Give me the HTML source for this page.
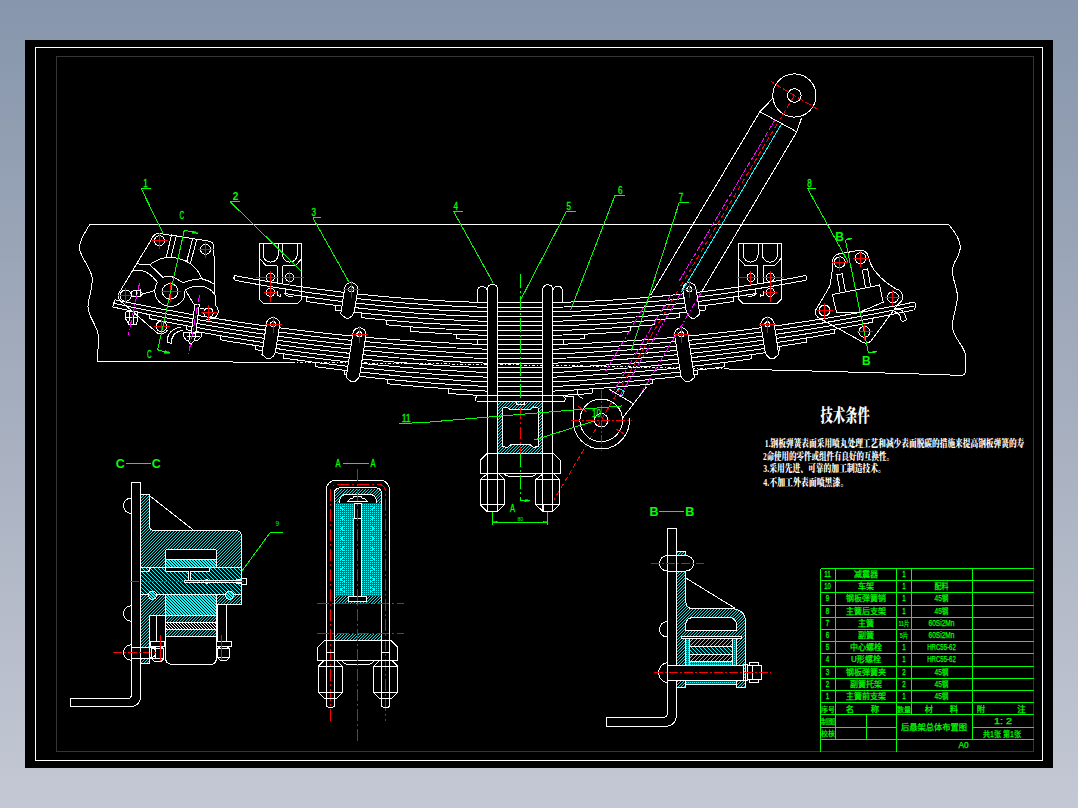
<!DOCTYPE html>
<html lang="zh"><head><meta charset="utf-8"><title>后悬架总体布置图</title>
<style>
html,body{margin:0;padding:0}
body{width:1078px;height:808px;overflow:hidden;background:linear-gradient(180deg,#8796ac 0%,#a5aebe 50%,#c4c8d4 100%)}
svg{position:absolute;left:0;top:0;display:block}
path,circle,rect,line{fill:none;stroke-width:1;stroke-linecap:butt;stroke-linejoin:miter}
.blk{fill:#000;stroke:none}
.gry{stroke:#343434}
.hc{fill:url(#hc);stroke:none}
.hc2{fill:url(#hc2);stroke:none}
.hcd{fill:url(#hcd);stroke:none}
.hcb{fill:url(#hcb);stroke:none}
.hw{fill:url(#hw);stroke:none}
.hcm{fill:url(#hcm);stroke:none}
.hw2{fill:url(#hc2m);stroke:none}
.gtB{fill:#0f0;font-size:12.5px;font-weight:bold}
.w{stroke:#fff}
.wb{stroke:#fff;fill:#000}
.kb{stroke:none;fill:#000}
.wdd{stroke:#fff;stroke-dasharray:3 2 1 2}
.r{stroke:#f00}
.rd{stroke:#f00;stroke-dasharray:5 3}
.rd2{stroke:#f00;stroke-dasharray:9 2 2 2}
.rd3{stroke:#f00;stroke-dasharray:6 2.5}
.rdd{stroke:#f00;stroke-dasharray:12 3 2 3}
.g{stroke:#0f0}
.gf{stroke:#0f0;fill:#0f0;stroke-width:.6}
.gb{stroke:#0f0;stroke-width:1.6}
.gdd{stroke:#0f0;stroke-dasharray:14 3 2 3}
.c{stroke:#0ff}
.cf{stroke:#0ff;fill:#0ff}
.m{stroke:#f0f}
.md{stroke:#f0f;stroke-dasharray:5 2}
.mdd{stroke:#f0f;stroke-dasharray:7 2 1.5 2}
text{font-family:"Liberation Sans","Noto Sans CJK SC",sans-serif;stroke:none}
.gt{fill:#0f0;font-size:9.5px}
.gl{fill:#0f0;font-size:10.4px;stroke:#0f0;stroke-width:.3px}
.glb{fill:#0f0;font-size:10.4px;font-weight:bold}
.glc{fill:#0f0;font-size:11.6px;stroke:#0f0;stroke-width:.3px}
.gtb{fill:#0f0;font-size:12px;font-weight:bold}
.g9{fill:#0f0;font-size:8px}
.gts{fill:#0f0;font-size:5px}
.tt{fill:#0f0;font-size:8.3px;stroke:#0f0;stroke-width:.25px}
.tn{fill:#0f0;font-size:9px;stroke:#0f0;stroke-width:.3px}
.tt2{fill:#0f0;font-size:7px;stroke:#0f0;stroke-width:.2px}
.nt{fill:#fff;font-size:18.5px;font-weight:900;font-family:"Liberation Serif","Noto Serif CJK SC",serif}
.nn{fill:#fff;font-size:10.6px;font-weight:900;font-family:"Liberation Serif","Noto Serif CJK SC",serif}
</style></head><body>
<svg width="1078" height="808" viewBox="0 0 1078 808" shape-rendering="crispEdges">
<defs>
<pattern id="hc" width="3" height="3" patternUnits="userSpaceOnUse"><rect width="3" height="3" style="fill:#000;stroke:none"/><path d="M-1 4L4 -1M-1 1L1 -1M2 4L4 2" style="stroke:#0ff;stroke-width:0.9"/></pattern>
<pattern id="hc2" width="4" height="4" patternUnits="userSpaceOnUse"><rect width="4" height="4" style="fill:#000;stroke:none"/><path d="M-1 5L5 -1M-1 1L1 -1M3 5L5 3" style="stroke:#0ff;stroke-width:1.2"/></pattern>
<pattern id="hcd" width="2" height="2" patternUnits="userSpaceOnUse"><rect width="2" height="2" style="fill:#005c5c;stroke:none"/><rect width="1.1" height="1.1" style="fill:#0ff;stroke:none"/></pattern>
<pattern id="hcb" width="4" height="4" patternUnits="userSpaceOnUse"><rect width="4" height="4" style="fill:#0ff;stroke:none"/><path d="M-1 -1L5 5M-1 3L1 5M3 -1L5 1" style="stroke:#000;stroke-width:1.5"/></pattern>
<pattern id="hw" width="3" height="3" patternUnits="userSpaceOnUse"><rect width="3" height="3" style="fill:#000;stroke:none"/><path d="M-1 -1L4 4M-1 2L1 4M2 -1L4 1" style="stroke:#fff;stroke-width:1"/></pattern>
<pattern id="hc2m" width="4" height="4" patternUnits="userSpaceOnUse"><rect width="4" height="4" style="fill:#000;stroke:none"/><path d="M-1 -1L5 5M-1 3L1 5M3 -1L5 1" style="stroke:#0ff;stroke-width:1.2"/></pattern>
<pattern id="hcm" width="3" height="3" patternUnits="userSpaceOnUse"><rect width="3" height="3" style="fill:#0ff;stroke:none"/><path d="M-1 -1L4 4M-1 2L1 4M2 -1L4 1" style="stroke:#000;stroke-width:1.25"/></pattern>
</defs>
<rect class="blk" x="25.0" y="40.0" width="1028.0" height="728.0" />
<rect class="w" x="35.5" y="47.5" width="1007.0" height="713.0" />
<rect class="gry" x="56.5" y="56.5" width="977.0" height="695.0" />
<path class="w" d="M89.7 224.5L948.8 224.5" />
<path class="w" d="M89.7 224.5C84 234 79 242 79.5 248C80 258 92 268 92.3 279C92.6 292 87.5 298 88 307C88.5 318 98 326 98.5 337C99 347 97 355 97.1 361.7" />
<path class="w" d="M948.8 224.5C955 232 960.4 240 960.4 247.1C960.4 256 952.4 262 952.4 270.2C952.4 280 957.4 288 957.4 296.2C957.4 306 952.4 316 952.4 326.3C952.4 338 965.5 346 965.5 356.4L965.5 372L963.5 375.4" />
<path class="w" d="M97.1 361.7L116.6 361.7L136.1 361.7L155.6 361.8L175.1 361.8L194.6 361.9L214.0 361.9L233.5 362.0L253.0 362.1L272.5 362.3L292.0 362.4" />
<path class="wdd" d="M292.0 362.4L335.2 362.7L378.4 363.1L421.6 363.6L464.8 364.2L508.0 364.8L551.2 365.5L594.4 366.2L637.6 367.0L680.8 367.9L724.0 368.9" />
<path class="w" d="M724.0 368.9L748.0 369.4L771.9 370.0L795.9 370.6L819.8 371.2L843.8 371.9L867.7 372.5L891.6 373.2L915.6 373.9L939.5 374.7L963.5 375.4" />
<path class="w" d="M235.0 275.6L245.5 277.6L256.0 279.5L266.5 281.3L277.1 283.0L287.6 284.7L298.1 286.3L308.6 287.8L319.1 289.3L329.6 290.6L340.1 291.9L350.6 293.2L361.2 294.3L371.7 295.4L382.2 296.4L392.7 297.4L403.2 298.2L413.7 299.0L424.2 299.8L434.7 300.4L445.2 301.0L455.8 301.5L466.3 301.9L476.8 302.3L487.3 302.6" />
<path class="w" d="M553.3 302.6L563.8 302.3L574.3 301.9L584.8 301.5L595.3 301.0L605.9 300.4L616.4 299.8L626.9 299.0L637.4 298.2L647.9 297.4L658.4 296.4L668.9 295.4L679.4 294.3L690.0 293.2L700.5 291.9L711.0 290.6L721.5 289.3L732.0 287.8L742.5 286.3L753.0 284.7L763.5 283.0L774.1 281.3L784.6 279.5L795.1 277.6L805.6 275.6" />
<path class="w" d="M235.0 280.3L245.5 282.2L256.0 284.1L266.5 285.9L277.1 287.7L287.6 289.3L298.1 290.9L308.6 292.5L319.1 293.9L329.6 295.3L340.1 296.6L350.6 297.8L361.2 299.0L371.7 300.1L382.2 301.1L392.7 302.0L403.2 302.9L413.7 303.7L424.2 304.4L434.7 305.1L445.2 305.7L455.8 306.2L466.3 306.6L476.8 307.0L487.3 307.3" />
<path class="w" d="M553.3 307.3L563.8 307.0L574.3 306.6L584.8 306.2L595.3 305.7L605.9 305.1L616.4 304.4L626.9 303.7L637.4 302.9L647.9 302.0L658.4 301.1L668.9 300.1L679.4 299.0L690.0 297.8L700.5 296.6L711.0 295.3L721.5 293.9L732.0 292.5L742.5 290.9L753.0 289.3L763.5 287.7L774.1 285.9L784.6 284.1L795.1 282.2L805.6 280.3" />
<path class="w" d="M285.0 293.6L293.4 294.9L301.9 296.2L310.3 297.4L318.7 298.5L327.1 299.6L335.6 300.7L344.0 301.7L352.4 302.7L360.9 303.6L369.3 304.5L377.7 305.3L386.2 306.1L394.6 306.9L403.0 307.5L411.4 308.2L419.9 308.8L428.3 309.4L436.7 309.9L445.2 310.3L453.6 310.7L462.0 311.1L470.4 311.4L478.9 311.7L487.3 311.9" />
<path class="w" d="M553.3 311.9L561.7 311.7L570.2 311.4L578.6 311.1L587.0 310.7L595.4 310.3L603.9 309.9L612.3 309.4L620.7 308.8L629.2 308.2L637.6 307.5L646.0 306.9L654.4 306.1L662.9 305.3L671.3 304.5L679.7 303.6L688.2 302.7L696.6 301.7L705.0 300.7L713.5 299.6L721.9 298.5L730.3 297.4L738.7 296.2L747.2 294.9L755.6 293.6" />
<path class="w" d="M285.5 293.6L285.5 288.9" />
<path class="w" d="M755.5 293.6L755.5 288.9" />
<path class="w" d="M306.8 301.5L314.3 302.6L321.8 303.6L329.4 304.6L336.9 305.5L344.4 306.4L351.9 307.3L359.4 308.1L367.0 308.9L374.5 309.7L382.0 310.4L389.5 311.1L397.1 311.7L404.6 312.3L412.1 312.9L419.6 313.4L427.1 313.9L434.7 314.4L442.2 314.8L449.7 315.2L457.2 315.6L464.7 315.9L472.3 316.1L479.8 316.4L487.3 316.6" />
<path class="w" d="M553.3 316.6L560.8 316.4L568.3 316.1L575.9 315.9L583.4 315.6L590.9 315.2L598.4 314.8L605.9 314.4L613.5 313.9L621.0 313.4L628.5 312.9L636.0 312.3L643.5 311.7L651.1 311.1L658.6 310.4L666.1 309.7L673.6 308.9L681.2 308.1L688.7 307.3L696.2 306.4L703.7 305.5L711.2 304.6L718.8 303.6L726.3 302.6L733.8 301.5" />
<path class="w" d="M306.5 301.5L306.5 296.9" />
<path class="w" d="M733.5 301.5L733.5 296.9" />
<path class="w" d="M335.3 310.0L341.6 310.8L348.0 311.5L354.3 312.2L360.6 312.9L367.0 313.6L373.3 314.2L379.6 314.8L386.0 315.4L392.3 316.0L398.6 316.5L405.0 317.0L411.3 317.5L417.6 318.0L424.0 318.4L430.3 318.8L436.6 319.2L443.0 319.5L449.3 319.8L455.6 320.1L462.0 320.4L468.3 320.7L474.6 320.9L481.0 321.1L487.3 321.2" />
<path class="w" d="M553.3 321.2L559.6 321.1L566.0 320.9L572.3 320.7L578.6 320.4L585.0 320.1L591.3 319.8L597.6 319.5L604.0 319.2L610.3 318.8L616.6 318.4L623.0 318.0L629.3 317.5L635.6 317.0L642.0 316.5L648.3 316.0L654.6 315.4L661.0 314.8L667.3 314.2L673.6 313.6L680.0 312.9L686.3 312.2L692.6 311.5L699.0 310.8L705.3 310.0" />
<path class="w" d="M335.5 310.0L335.5 305.3" />
<path class="w" d="M705.5 310.0L705.5 305.3" />
<path class="w" d="M361.4 317.7L366.6 318.2L371.9 318.7L377.1 319.3L382.4 319.8L387.6 320.2L392.9 320.7L398.1 321.1L403.4 321.6L408.6 322.0L413.9 322.4L419.1 322.7L424.4 323.1L429.6 323.4L434.8 323.7L440.1 324.0L445.3 324.3L450.6 324.6L455.8 324.8L461.1 325.0L466.3 325.2L471.6 325.4L476.8 325.6L482.1 325.8L487.3 325.9" />
<path class="w" d="M553.3 325.9L558.5 325.8L563.8 325.6L569.0 325.4L574.3 325.2L579.5 325.0L584.8 324.8L590.0 324.6L595.3 324.3L600.5 324.0L605.8 323.7L611.0 323.4L616.2 323.1L621.5 322.7L626.7 322.4L632.0 322.0L637.2 321.6L642.5 321.1L647.7 320.7L653.0 320.2L658.2 319.8L663.5 319.3L668.7 318.7L674.0 318.2L679.2 317.7" />
<path class="w" d="M361.5 317.7L361.5 313.0" />
<path class="w" d="M679.5 317.7L679.5 313.0" />
<path class="w" d="M386.5 324.8L390.7 325.2L394.9 325.5L399.1 325.9L403.3 326.2L407.5 326.5L411.7 326.9L415.9 327.2L420.1 327.5L424.3 327.7L428.5 328.0L432.7 328.3L436.9 328.5L441.1 328.7L445.3 329.0L449.5 329.2L453.7 329.4L457.9 329.6L462.1 329.7L466.3 329.9L470.5 330.1L474.7 330.2L478.9 330.3L483.1 330.5L487.3 330.6" />
<path class="w" d="M553.3 330.6L557.5 330.5L561.7 330.3L565.9 330.2L570.1 330.1L574.3 329.9L578.5 329.7L582.7 329.6L586.9 329.4L591.1 329.2L595.3 329.0L599.5 328.7L603.7 328.5L607.9 328.3L612.1 328.0L616.3 327.7L620.5 327.5L624.7 327.2L628.9 326.9L633.1 326.5L637.3 326.2L641.5 325.9L645.7 325.5L649.9 325.2L654.1 324.8" />
<path class="w" d="M386.5 324.8L386.5 320.1" />
<path class="w" d="M654.5 324.8L654.5 320.1" />
<path class="w" d="M410.5 331.4L413.7 331.7L416.9 331.9L420.1 332.1L423.3 332.3L426.5 332.5L429.7 332.7L432.9 332.9L436.1 333.1L439.3 333.3L442.5 333.5L445.7 333.6L448.9 333.8L452.1 334.0L455.3 334.1L458.5 334.3L461.7 334.4L464.9 334.5L468.1 334.6L471.3 334.7L474.5 334.9L477.7 335.0L480.9 335.1L484.1 335.1L487.3 335.2" />
<path class="w" d="M553.3 335.2L556.5 335.1L559.7 335.1L562.9 335.0L566.1 334.9L569.3 334.7L572.5 334.6L575.7 334.5L578.9 334.4L582.1 334.3L585.3 334.1L588.5 334.0L591.7 333.8L594.9 333.6L598.1 333.5L601.3 333.3L604.5 333.1L607.7 332.9L610.9 332.7L614.1 332.5L617.3 332.3L620.5 332.1L623.7 331.9L626.9 331.7L630.1 331.4" />
<path class="w" d="M410.5 331.4L410.5 326.8" />
<path class="w" d="M630.5 331.4L630.5 326.8" />
<path class="w" d="M456.4 338.8L457.7 338.9L459.0 338.9L460.3 339.0L461.5 339.0L462.8 339.1L464.1 339.1L465.4 339.2L466.7 339.2L468.0 339.3L469.3 339.3L470.6 339.4L471.9 339.4L473.1 339.5L474.4 339.5L475.7 339.6L477.0 339.6L478.3 339.6L479.6 339.7L480.9 339.7L482.1 339.7L483.4 339.8L484.7 339.8L486.0 339.8L487.3 339.9" />
<path class="w" d="M553.3 339.9L554.6 339.8L555.9 339.8L557.2 339.8L558.4 339.7L559.7 339.7L561.0 339.7L562.3 339.6L563.6 339.6L564.9 339.6L566.2 339.5L567.5 339.5L568.8 339.4L570.0 339.4L571.3 339.3L572.6 339.3L573.9 339.2L575.2 339.2L576.5 339.1L577.8 339.1L579.0 339.0L580.3 339.0L581.6 338.9L582.9 338.9L584.2 338.8" />
<path class="w" d="M456.5 338.8L456.5 334.2" />
<path class="w" d="M584.5 338.8L584.5 334.2" />
<path class="w" d="M477.4 344.3L477.8 344.3L478.2 344.3L478.6 344.3L479.0 344.3L479.5 344.3L479.9 344.3L480.3 344.4L480.7 344.4L481.1 344.4L481.5 344.4L481.9 344.4L482.4 344.4L482.8 344.4L483.2 344.4L483.6 344.4L484.0 344.5L484.4 344.5L484.8 344.5L485.2 344.5L485.6 344.5L486.1 344.5L486.5 344.5L486.9 344.5L487.3 344.5" />
<path class="w" d="M553.3 344.5L553.7 344.5L554.1 344.5L554.5 344.5L554.9 344.5L555.4 344.5L555.8 344.5L556.2 344.5L556.6 344.5L557.0 344.4L557.4 344.4L557.8 344.4L558.2 344.4L558.7 344.4L559.1 344.4L559.5 344.4L559.9 344.4L560.3 344.4L560.7 344.3L561.1 344.3L561.5 344.3L562.0 344.3L562.4 344.3L562.8 344.3L563.2 344.3" />
<path class="w" d="M477.5 344.3L477.5 339.6" />
<path class="w" d="M563.5 344.3L563.5 339.6" />
<path class="w" d="M235.0 275.6Q232.8 277.9 235.0 280.3" />
<path class="w" d="M805.6 275.6Q807.8 277.9 805.6 280.3" />
<path class="w" d="M114.9 299.7L130.4 302.9L145.9 306.0L161.4 309.0L177.0 311.8L192.5 314.6L208.0 317.2L223.5 319.7L239.0 322.1L254.6 324.4L270.1 326.6L285.6 328.6L301.1 330.5L316.6 332.3L332.1 334.0L347.6 335.6L363.2 337.1L378.7 338.4L394.2 339.6L409.7 340.7L425.2 341.7L440.8 342.6L456.3 343.4L471.8 344.0L487.3 344.5" />
<path class="w" d="M553.3 344.5L568.3 344.0L583.4 343.4L598.4 342.7L613.5 341.9L628.5 340.9L643.6 339.9L658.6 338.7L673.7 337.4L688.7 336.0L703.8 334.5L718.8 332.9L733.9 331.2L748.9 329.4L763.9 327.4L779.0 325.4L794.0 323.2L809.1 321.0L824.1 318.6L839.2 316.1L854.2 313.5L869.3 310.8L884.3 308.0L899.4 305.1L914.4 302.0" />
<path class="w" d="M113.8 303.3L129.4 306.6L144.9 309.8L160.5 312.8L176.1 315.7L191.6 318.5L207.2 321.2L222.7 323.7L238.3 326.2L253.9 328.5L269.4 330.7L285.0 332.8L300.6 334.7L316.1 336.6L331.7 338.3L347.2 339.9L362.8 341.4L378.4 342.8L393.9 344.1L409.5 345.2L425.1 346.3L440.6 347.2L456.2 348.0L471.7 348.6L487.3 349.2" />
<path class="w" d="M553.3 349.2L568.3 348.7L583.3 348.0L598.4 347.3L613.4 346.4L628.4 345.4L643.4 344.3L658.5 343.1L673.5 341.8L688.5 340.4L703.5 338.9L718.6 337.3L733.6 335.5L748.6 333.7L763.6 331.7L778.7 329.6L793.7 327.5L808.7 325.2L823.8 322.8L838.8 320.3L853.8 317.6L868.8 314.9L883.8 312.1L898.9 309.1L913.9 306.1" />
<path class="w" d="M112.8 307.0L128.4 310.3L144.0 313.5L159.6 316.6L175.2 319.6L190.8 322.4L206.4 325.1L222.0 327.7L237.6 330.2L253.2 332.6L268.8 334.8L284.4 337.0L300.1 339.0L315.7 340.9L331.3 342.6L346.9 344.3L362.5 345.8L378.1 347.2L393.7 348.5L409.3 349.7L424.9 350.8L440.5 351.7L456.1 352.6L471.7 353.3L487.3 353.9" />
<path class="w" d="M553.3 353.9L568.3 353.3L583.3 352.6L598.3 351.8L613.3 350.9L628.3 349.9L643.3 348.8L658.3 347.6L673.3 346.3L688.3 344.8L703.3 343.3L718.3 341.6L733.4 339.9L748.4 338.0L763.4 336.0L778.4 333.9L793.4 331.7L808.4 329.4L823.4 326.9L838.4 324.4L853.4 321.8L868.4 319.0L883.4 316.1L898.4 313.2L913.4 310.1" />
<path class="w" d="M149.0 318.5L163.1 321.3L177.2 324.0L191.3 326.6L205.4 329.0L219.5 331.4L233.6 333.7L247.7 335.9L261.8 338.0L275.9 340.0L290.0 341.9L304.1 343.8L318.1 345.5L332.2 347.1L346.3 348.6L360.4 350.0L374.5 351.4L388.6 352.6L402.7 353.7L416.8 354.8L430.9 355.7L445.0 356.6L459.1 357.3L473.2 358.0L487.3 358.5" />
<path class="w" d="M553.3 358.5L566.6 358.0L579.9 357.4L593.2 356.7L606.5 355.9L619.9 355.0L633.2 354.1L646.5 353.1L659.8 351.9L673.1 350.7L686.4 349.4L699.7 348.0L713.0 346.6L726.4 345.0L739.7 343.4L753.0 341.6L766.3 339.8L779.6 337.9L792.9 335.9L806.2 333.9L819.5 331.7L832.9 329.5L846.2 327.1L859.5 324.7L872.8 322.2" />
<path class="w" d="M149.5 318.5L149.5 314.5" />
<path class="w" d="M872.5 322.2L872.5 318.2" />
<path class="w" d="M186.0 329.7L198.6 331.9L211.1 334.1L223.7 336.3L236.2 338.3L248.8 340.3L261.3 342.2L273.9 344.0L286.4 345.7L299.0 347.4L311.5 349.0L324.1 350.5L336.6 351.9L349.2 353.3L361.8 354.6L374.3 355.8L386.9 356.9L399.4 358.0L412.0 358.9L424.5 359.8L437.1 360.7L449.6 361.4L462.2 362.1L474.7 362.7L487.3 363.2" />
<path class="w" d="M553.3 363.2L565.0 362.7L576.8 362.2L588.5 361.5L600.2 360.9L612.0 360.1L623.7 359.3L635.4 358.4L647.2 357.5L658.9 356.5L670.6 355.4L682.4 354.2L694.1 353.0L705.8 351.7L717.6 350.4L729.3 349.0L741.0 347.5L752.8 345.9L764.5 344.3L776.2 342.6L788.0 340.9L799.7 339.0L811.4 337.2L823.2 335.2L834.9 333.2" />
<path class="w" d="M186.5 329.7L186.5 325.6" />
<path class="w" d="M834.5 333.2L834.5 329.1" />
<path class="w" d="M220.4 339.8L231.5 341.7L242.6 343.5L253.8 345.2L264.9 346.9L276.0 348.5L287.1 350.1L298.2 351.6L309.4 353.0L320.5 354.4L331.6 355.7L342.7 357.0L353.9 358.2L365.0 359.3L376.1 360.4L387.2 361.4L398.3 362.4L409.5 363.2L420.6 364.1L431.7 364.9L442.8 365.6L453.9 366.2L465.1 366.8L476.2 367.4L487.3 367.8" />
<path class="w" d="M553.3 367.8L563.9 367.4L574.4 366.9L585.0 366.3L595.5 365.7L606.1 365.0L616.6 364.3L627.2 363.6L637.8 362.7L648.3 361.8L658.9 360.9L669.4 359.9L680.0 358.9L690.6 357.8L701.1 356.6L711.7 355.4L722.2 354.1L732.8 352.8L743.4 351.4L753.9 350.0L764.5 348.5L775.0 347.0L785.6 345.4L796.1 343.8L806.7 342.1" />
<path class="w" d="M220.5 339.8L220.5 335.7" />
<path class="w" d="M806.5 342.1L806.5 337.9" />
<path class="w" d="M255.0 349.6L264.7 351.1L274.4 352.5L284.0 353.9L293.7 355.2L303.4 356.5L313.1 357.8L322.8 359.0L332.4 360.2L342.1 361.3L351.8 362.3L361.5 363.4L371.2 364.3L380.8 365.3L390.5 366.1L400.2 367.0L409.9 367.8L419.5 368.5L429.2 369.2L438.9 369.9L448.6 370.5L458.3 371.1L467.9 371.6L477.6 372.1L487.3 372.5" />
<path class="w" d="M553.3 372.5L562.7 372.1L572.1 371.6L581.5 371.1L590.9 370.6L600.4 370.0L609.8 369.3L619.2 368.7L628.6 368.0L638.0 367.2L647.4 366.4L656.8 365.5L666.2 364.6L675.7 363.7L685.1 362.7L694.5 361.7L703.9 360.6L713.3 359.5L722.7 358.4L732.1 357.2L741.6 356.0L751.0 354.7L760.4 353.4L769.8 352.0L779.2 350.6" />
<path class="w" d="M255.5 349.6L255.5 345.4" />
<path class="w" d="M779.5 350.6L779.5 346.4" />
<path class="w" d="M283.5 358.1L292.0 359.3L300.5 360.4L309.0 361.6L317.5 362.7L326.0 363.7L334.4 364.7L342.9 365.7L351.4 366.7L359.9 367.6L368.4 368.5L376.9 369.3L385.4 370.1L393.9 370.9L402.4 371.7L410.9 372.4L419.4 373.0L427.9 373.7L436.4 374.3L444.8 374.8L453.3 375.4L461.8 375.9L470.3 376.3L478.8 376.8L487.3 377.2" />
<path class="w" d="M553.3 377.2L561.6 376.8L569.8 376.4L578.1 375.9L586.4 375.4L594.6 374.9L602.9 374.4L611.2 373.8L619.4 373.2L627.7 372.5L636.0 371.9L644.2 371.1L652.5 370.4L660.8 369.6L669.0 368.8L677.3 368.0L685.6 367.1L693.8 366.2L702.1 365.2L710.4 364.2L718.6 363.2L726.9 362.2L735.2 361.1L743.4 360.0L751.7 358.8" />
<path class="w" d="M283.5 358.1L283.5 353.8" />
<path class="w" d="M751.5 358.8L751.5 354.6" />
<path class="w" d="M315.5 366.7L322.7 367.6L329.8 368.5L337.0 369.4L344.1 370.2L351.3 371.1L358.4 371.8L365.6 372.6L372.8 373.3L379.9 374.1L387.1 374.8L394.2 375.4L401.4 376.1L408.6 376.7L415.7 377.3L422.9 377.8L430.0 378.4L437.2 378.9L444.4 379.4L451.5 379.9L458.7 380.3L465.8 380.7L473.0 381.1L480.1 381.5L487.3 381.8" />
<path class="w" d="M553.3 381.8L560.4 381.5L567.5 381.1L574.7 380.7L581.8 380.3L588.9 379.9L596.0 379.4L603.1 378.9L610.3 378.4L617.4 377.9L624.5 377.3L631.6 376.7L638.8 376.1L645.9 375.5L653.0 374.8L660.1 374.1L667.2 373.4L674.4 372.7L681.5 371.9L688.6 371.1L695.7 370.3L702.8 369.5L710.0 368.6L717.1 367.7L724.2 366.8" />
<path class="w" d="M315.5 366.7L315.5 362.4" />
<path class="w" d="M724.5 366.8L724.5 362.5" />
<path class="w" d="M344.7 374.7L350.6 375.4L356.6 376.0L362.5 376.7L368.5 377.3L374.4 377.9L380.4 378.6L386.3 379.1L392.2 379.7L398.2 380.3L404.1 380.8L410.1 381.3L416.0 381.8L421.9 382.3L427.9 382.8L433.8 383.2L439.8 383.6L445.7 384.1L451.6 384.5L457.6 384.8L463.5 385.2L469.5 385.5L475.4 385.9L481.4 386.2L487.3 386.5" />
<path class="w" d="M553.3 386.5L559.3 386.2L565.3 385.9L571.3 385.5L577.3 385.2L583.3 384.8L589.3 384.4L595.3 384.0L601.3 383.6L607.3 383.2L613.3 382.7L619.3 382.2L625.3 381.7L631.4 381.2L637.4 380.7L643.4 380.2L649.4 379.6L655.4 379.0L661.4 378.4L667.4 377.8L673.4 377.2L679.4 376.5L685.4 375.9L691.4 375.2L697.4 374.5" />
<path class="w" d="M344.5 374.7L344.5 370.3" />
<path class="w" d="M697.5 374.5L697.5 370.1" />
<path class="w" d="M387.9 383.8L392.0 384.2L396.2 384.6L400.3 384.9L404.5 385.3L408.6 385.7L412.8 386.0L416.9 386.4L421.0 386.7L425.2 387.1L429.3 387.4L433.5 387.7L437.6 388.0L441.7 388.4L445.9 388.6L450.0 388.9L454.2 389.2L458.3 389.5L462.4 389.7L466.6 390.0L470.7 390.2L474.9 390.5L479.0 390.7L483.2 390.9L487.3 391.1" />
<path class="w" d="M553.3 391.1L557.4 390.9L561.5 390.7L565.7 390.5L569.8 390.2L573.9 390.0L578.0 389.8L582.1 389.5L586.3 389.2L590.4 388.9L594.5 388.7L598.6 388.4L602.8 388.1L606.9 387.8L611.0 387.4L615.1 387.1L619.2 386.8L623.4 386.4L627.5 386.1L631.6 385.7L635.7 385.4L639.8 385.0L644.0 384.6L648.1 384.2L652.2 383.8" />
<path class="w" d="M387.5 383.8L387.5 379.3" />
<path class="w" d="M652.5 383.8L652.5 379.3" />
<path class="w" d="M448.2 393.4L449.8 393.5L451.5 393.6L453.1 393.7L454.7 393.8L456.3 394.0L458.0 394.1L459.6 394.2L461.2 394.3L462.9 394.4L464.5 394.5L466.1 394.6L467.8 394.7L469.4 394.8L471.0 394.9L472.6 395.0L474.3 395.1L475.9 395.2L477.5 395.3L479.2 395.4L480.8 395.4L482.4 395.5L484.0 395.6L485.7 395.7L487.3 395.8" />
<path class="w" d="M553.3 395.8L554.9 395.7L556.6 395.6L558.2 395.5L559.8 395.4L561.4 395.4L563.1 395.3L564.7 395.2L566.3 395.1L568.0 395.0L569.6 394.9L571.2 394.8L572.8 394.7L574.5 394.6L576.1 394.5L577.7 394.4L579.4 394.3L581.0 394.2L582.6 394.1L584.3 394.0L585.9 393.8L587.5 393.7L589.1 393.6L590.8 393.5L592.4 393.4" />
<path class="w" d="M448.5 393.4L448.5 388.8" />
<path class="w" d="M592.5 393.4L592.5 388.8" />
<path class="w" d="M114.9 299.7L112.6 307.0" />
<path class="w" d="M914.4 302.0Q916.9 306.0 913.9 309.9" />
<path class="w" d="M497.7 302.5L542.8 302.5" />
<path class="w" d="M497.7 307.5L542.8 307.5" />
<path class="w" d="M497.7 311.5L542.8 311.5" />
<path class="w" d="M497.7 316.5L542.8 316.5" />
<path class="w" d="M497.7 321.5L542.8 321.5" />
<path class="w" d="M497.7 325.5L542.8 325.5" />
<path class="w" d="M497.7 330.5L542.8 330.5" />
<path class="w" d="M497.7 335.5L542.8 335.5" />
<path class="w" d="M497.7 339.5L542.8 339.5" />
<path class="w" d="M497.7 344.5L542.8 344.5" />
<path class="w" d="M497.7 349.5L542.8 349.5" />
<path class="w" d="M497.7 353.5L542.8 353.5" />
<path class="w" d="M497.7 358.5L542.8 358.5" />
<path class="w" d="M497.7 363.5L542.8 363.5" />
<path class="w" d="M497.7 367.5L542.8 367.5" />
<path class="w" d="M497.7 372.5L542.8 372.5" />
<path class="w" d="M497.7 377.5L542.8 377.5" />
<path class="w" d="M497.7 381.5L542.8 381.5" />
<path class="w" d="M497.7 386.5L542.8 386.5" />
<path class="w" d="M497.7 391.5L542.8 391.5" />
<path class="w" d="M497.7 395.5L542.8 395.5" />
<path class="w" d="M259.5 243.0L301.8 243.0L301.8 299.3L298.0 303.2L263.3 303.2L259.5 299.3Z" />
<path class="w" d="M263.1 243L263.1 254.6A7.5 7.5 0 0 0 278.2 254.6L278.2 243" />
<path class="w" d="M282.6 243L282.6 254.8A7.3 7.3 0 0 0 297.2 254.8L297.2 243" />
<path class="w" d="M259.5 258.5L266.0 265.5L277.3 265.5" />
<path class="w" d="M282.9 265.5L295.5 265.5L301.8 258.5" />
<path class="w" d="M277.3 265.5L277.3 283.2L282.9 283.2L282.9 265.5" />
<circle class="w" cx="270.4" cy="277.4" r="4.1" />
<circle class="w" cx="289.6" cy="277.4" r="4.1" />
<circle class="w" cx="270.4" cy="292.3" r="4.1" />
<path class="r" d="M256.2 277.5L278.5 277.5" />
<path class="r" d="M281.5 277.5L303.5 277.5" />
<path class="r" d="M270.5 270.5L270.5 284.5" />
<path class="r" d="M289.5 270.5L289.5 284.5" />
<path class="r" d="M264.0 292.5L276.8 292.5" />
<path class="r" d="M270.5 285.9L270.5 302.1" />
<path class="w" d="M277.5 290.5L277.5 295.5L280.5 296.3L280.5 293.5" />
<path class="w" d="M284.0 293.2Q287.0 297 292.5 296.2" />
<path class="w" d="M781.1 243.0L738.8 243.0L738.8 299.3L742.6 303.2L777.3 303.2L781.1 299.3Z" />
<path class="w" d="M777.5 243L777.5 254.6A7.5 7.5 0 0 1 762.4 254.6L762.4 243" />
<path class="w" d="M758.0 243L758.0 254.8A7.3 7.3 0 0 1 743.4 254.8L743.4 243" />
<path class="w" d="M781.1 258.5L774.6 265.5L763.3 265.5" />
<path class="w" d="M757.7 265.5L745.1 265.5L738.8 258.5" />
<path class="w" d="M763.3 265.5L763.3 283.2L757.7 283.2L757.7 265.5" />
<circle class="w" cx="770.2" cy="277.4" r="4.1" />
<circle class="w" cx="751.0" cy="277.4" r="4.1" />
<circle class="w" cx="770.2" cy="292.3" r="4.1" />
<path class="r" d="M784.4 277.5L762.1 277.5" />
<path class="r" d="M759.1 277.5L737.1 277.5" />
<path class="r" d="M770.5 270.5L770.5 284.5" />
<path class="r" d="M750.5 270.5L750.5 284.5" />
<path class="r" d="M776.6 292.5L763.8 292.5" />
<path class="r" d="M770.5 285.9L770.5 302.1" />
<path class="w" d="M763.1 290.5L763.1 295.5L760.1 296.3L760.1 293.5" />
<path class="w" d="M756.6 293.2Q753.6 297 748.1 296.2" />
<path class="w" d="M119.3 292.5L151.2 239.8Q153.3 234 158.6 233.4L209.7 241.2Q213.6 242.4 213.8 247.6L215.3 305.5" />
<path class="w" d="M119.3 292.5A7.4 7.4 0 0 0 121.2 301.6L156.6 332.4A7 7 0 0 0 167.3 330.2" />
<path class="w" d="M215.3 305.5A7.2 7.2 0 0 1 213.5 318 L206.5 320" />
<circle class="w" cx="159.4" cy="240.7" r="5.0" />
<path class="r" d="M151.5 240.5L167.5 240.5" />
<path class="r" d="M159.5 232.5L159.5 248.5" />
<circle class="w" cx="205.5" cy="249.3" r="5.0" />
<path class="r" d="M197.5 249.5L213.5 249.5" />
<path class="r" d="M205.5 241.5L205.5 257.5" />
<circle class="w" cx="125.6" cy="295.6" r="5.7" />
<path class="r" d="M117.5 295.5L133.5 295.5" />
<path class="r" d="M125.5 287.5L125.5 303.5" />
<circle class="w" cx="208.5" cy="312.6" r="4.7" />
<path class="r" d="M200.5 312.5L216.5 312.5" />
<path class="r" d="M208.5 304.5L208.5 320.5" />
<circle class="w" cx="161.4" cy="326.4" r="5.3" />
<path class="r" d="M153.5 326.5L169.5 326.5" />
<path class="r" d="M161.5 318.5L161.5 334.5" />
<circle class="w" cx="170.2" cy="291.4" r="7.8" />
<path class="r" d="M160.5 291.5L180.5 291.5" />
<path class="r" d="M170.5 281.5L170.5 301.5" />
<path class="w" d="M171.6 234.5L166.1 257.9" />
<path class="w" d="M176.3 235.4L170.7 258.2" />
<path class="w" d="M192.5 238.7L186.9 261.0" />
<path class="w" d="M196.6 239.8L190.2 264.3" />
<path class="w" d="M149.6 264.9A33.7 33.7 0 0 1 201.9 278.8" />
<path class="w" d="M136.8 263.8L149.6 264.9" />
<path class="w" d="M149.6 264.9Q156 270 162.9 277.2L168.5 276.2L174 277.3L183 282.7Q192 279 201.9 278.8Q209 280.5 214.8 284.4" />
<path class="w" d="M132.9 271Q140 269 146 272Q153 276 157.4 282.2Q155 286 154.8 290.6" />
<path class="w" d="M154.8 290.6A15.6 15.6 0 0 0 184.8 296.8" />
<path class="w" d="M184.8 296.8Q183.5 293 185.2 290Q189 286.5 199.7 286Q209 286.5 214.9 294.4" />
<path class="w" d="M185.2 290.0L194.1 304.5" />
<path class="w" d="M131.7 291.4L136.0 290.2L136.0 296.6L131.7 296.6Z" />
<path class="w" d="M136.0 290.8L140.5 289.8L140.5 296.0L136.0 296.0" />
<path class="w" d="M140.5 291.6L142.9 293.9L140.5 296.0" />
<path class="w" d="M142.9 293.9L154.6 290.6" />
<path class="w" d="M126.0 311.8L137.5 311.8L138.0 319.0L136.0 324.6L129.5 324.6L125.6 319.0Z" />
<path class="w" d="M129.5 311.8L128.8 324.6" />
<path class="w" d="M134.2 311.8L133.5 324.6" />
<path class="w" d="M125.8 317.5L138.0 317.5" />
<path class="mdd" d="M139.5 283.3L128.4 334.6" />
<path class="wb" d="M194.8 304.5L199.3 304.5L195.7 333.9L191.2 333.9Z" />
<path class="w" d="M183.9 332.0L201.5 332.0L201.5 336.5L198.0 340.0L194.5 340.5L190.8 344.6L188.0 340.5L185.8 340.0L183.9 336.5Z" />
<path class="w" d="M186.5 336.5L199.5 336.5" />
<path class="w" d="M190.0 332.0L189.2 340.3" />
<path class="w" d="M195.6 332.0L194.8 340.3" />
<path class="mdd" d="M199.5 295.0L188.6 354.1" />
<path class="w" d="M200.5 309.0L204.0 308.2" />
<path class="w" d="M180.6 327.2Q172 328.5 168.6 334.8Q167 338 167.2 341.9L171.2 343.7Q171.3 338 174 334.5Q177.5 331 182.8 330.3" />
<path class="w" d="M832.7 262A7.6 7.6 0 0 1 838.6 254L859.4 250.2A7.6 7.6 0 0 1 868.2 256.6Q870.5 265 874.3 270.1Q880 278 889 284.3L895.5 288.8A8 8 0 0 1 898.6 303.6L871 341A7.8 7.8 0 0 1 859.6 340.3L818.2 317.6A7.8 7.8 0 0 1 815.6 310.2L829.7 286.5Q832.5 274 832.7 262" />
<circle class="w" cx="839.7" cy="262.3" r="5.5" />
<path class="r" d="M831.5 262.5L847.5 262.5" />
<path class="r" d="M839.5 254.5L839.5 270.5" />
<circle class="w" cx="860.5" cy="258.3" r="5.5" />
<path class="r" d="M852.5 258.5L868.5 258.5" />
<path class="r" d="M860.5 250.5L860.5 266.5" />
<circle class="w" cx="892.9" cy="297.3" r="5.5" />
<path class="r" d="M884.5 297.5L900.5 297.5" />
<path class="r" d="M892.5 289.5L892.5 305.5" />
<circle class="w" cx="824.5" cy="310.5" r="5.5" />
<path class="r" d="M816.5 310.5L832.5 310.5" />
<path class="r" d="M824.5 302.5L824.5 318.5" />
<circle class="w" cx="864.3" cy="331.8" r="5.5" />
<path class="r" d="M856.5 331.5L872.5 331.5" />
<path class="r" d="M864.5 323.5L864.5 339.5" />
<path class="w" d="M832.4 294.6L879.5 285.0L883.2 302.1L869.8 308.0L859.4 312.0L836.4 312.0Z" />
<path class="w" d="M840.1 292.4L836.9 274.6L842.3 273.8L845.3 290.9" />
<path class="w" d="M865.4 287.2L862.4 270.1L867.6 268.9L870.6 286.2" />
<path class="w" d="M895.1 308.8Q900.5 308 903.6 312.5Q906 316 906.4 319.4Q904.5 322.3 901.2 320.6Q900.5 315.5 898 313.2Q896.2 311.8 893.6 311.6" />
<path class="wb" d="M344.5 289.3A6.7 6.7 0 0 1 357.9 289.3L354.2 312.3L351.9 315.9L349.1 318.1L345.9 318.1L343.1 315.9L340.8 313.8Z" />
<circle class="w" cx="351.2" cy="289.3" r="2.6" />
<path class="r" d="M343.0 289.5L360.0 289.5" />
<path class="r" d="M351.5 281.0L351.5 298.0" />
<path class="wb" d="M682.7 289.3A6.7 6.7 0 0 1 696.1 289.3L699.8 313.8L697.5 315.9L694.7 318.1L691.5 318.1L688.7 315.9L686.4 312.3Z" />
<circle class="w" cx="689.4" cy="289.3" r="2.6" />
<path class="r" d="M681.0 289.5L698.0 289.5" />
<path class="r" d="M689.5 281.0L689.5 298.0" />
<path class="wb" d="M266.4 324.3A6.7 6.7 0 0 1 279.8 324.3L275.3 352.8L273.0 356.4L270.2 358.6L267.0 358.6L264.2 356.4L261.9 354.3Z" />
<circle class="w" cx="273.1" cy="324.3" r="2.6" />
<path class="r" d="M265.0 324.5L282.0 324.5" />
<path class="r" d="M273.5 316.0L273.5 333.0" />
<path class="wb" d="M760.8 324.3A6.7 6.7 0 0 1 774.2 324.3L778.7 354.3L776.4 356.4L773.6 358.6L770.4 358.6L767.6 356.4L765.3 352.8Z" />
<circle class="w" cx="767.5" cy="324.3" r="2.6" />
<path class="r" d="M759.0 324.5L776.0 324.5" />
<path class="r" d="M767.5 316.0L767.5 333.0" />
<path class="wb" d="M352.7 334.4A6.7 6.7 0 0 1 366.1 334.4L359.6 375.9L357.3 379.5L354.6 381.7L351.3 381.7L348.6 379.5L346.2 377.4Z" />
<circle class="w" cx="359.4" cy="334.4" r="2.6" />
<path class="r" d="M351.0 334.5L368.0 334.5" />
<path class="r" d="M359.5 326.0L359.5 343.0" />
<path class="wb" d="M674.5 334.4A6.7 6.7 0 0 1 687.9 334.4L694.4 377.4L692.0 379.5L689.2 381.7L686.0 381.7L683.2 379.5L680.9 375.9Z" />
<circle class="w" cx="681.2" cy="334.4" r="2.6" />
<path class="r" d="M673.0 334.5L690.0 334.5" />
<path class="r" d="M681.5 326.0L681.5 343.0" />
<path class="w" d="M477.4 301.5L477.4 291.0A5.0 5.0 0 0 1 487.3 291.0" />
<path class="w" d="M552.9 290.8A4.8 4.8 0 0 1 562.5 290.8L562.5 301.5" />
<path class="wb" d="M487.3 511.6L487.3 289.3A5.2 5.2 0 0 1 497.7 289.3L497.7 511.6" />
<path class="wb" d="M542.8 511.6L542.8 289.2A5.1 5.1 0 0 1 552.9 289.2L552.9 511.6" />
<path class="w" d="M477.5 395.8L563 395.8M476.5 401.4L564.2 401.4M477.5 395.8Q474.0 398.5 476.5 401.4M563 395.8Q566.6 398.5 564.2 401.4" />
<path class="hc" d="M497.7 401.4L542.8 401.4L542.8 453.2L497.7 453.2ZM502.8 408L507 407L510 409.3L530.6 409.3L533.6 407L538.2 408L538.2 446.5L533.5 447.4L530 444.6L511 444.6L507.5 447.4L502.8 446.5Z" fill-rule="evenodd"/>
<path class="w" d="M497.7 401.4L542.8 401.4L542.8 453.2L497.7 453.2Z" />
<path class="w" d="M502.8 408L507 407L510 409.3L530.6 409.3L533.6 407L538.2 408L538.2 446.5L533.5 447.4L530 444.6L511 444.6L507.5 447.4L502.8 446.5Z" />
<path class="w" d="M516 401.4L516 404.6L524.6 404.6L524.6 401.4" />
<path class="w" d="M480.1 460.4L487.3 453.3L553.5 453.3L560.7 460.4L560.7 473.0L559.6 473.9L481.2 473.9L480.1 473.0Z" />
<path class="w" d="M504.4 473.9Q506 476.3 509.5 476.4L531 476.4Q534.5 476.3 536 473.9" />
<path class="w" d="M480.1 479.6L487.1 473.9L499.1 473.9L504.6 479.6L504.6 504.6L497.4 511.6L487.3 511.6L480.1 504.6Z" />
<path class="w" d="M480.1 479.5L504.6 479.5" />
<path class="w" d="M480.1 504.5L504.6 504.5" />
<path class="w" d="M487.5 504.6L487.5 511.6" />
<path class="w" d="M497.5 504.6L497.5 511.6" />
<path class="w" d="M535.8 479.6L542.8 473.9L554.1 473.9L559.6 479.6L559.6 504.6L552.4 511.6L543.0 511.6L535.8 504.6Z" />
<path class="w" d="M535.8 479.5L559.6 479.5" />
<path class="w" d="M535.8 504.5L559.6 504.5" />
<path class="w" d="M543.5 504.6L543.5 511.6" />
<path class="w" d="M552.5 504.6L552.5 511.6" />
<path class="gdd" d="M520.5 273.9L520.5 401.0" />
<path class="gdd" d="M520.5 453.3L520.5 500.6" />
<path class="rdd" d="M520.5 407.0L520.5 453.0" />
<path class="g" d="M520.3 500.6L529.9 500.6" />
<path class="gf" d="M524.5 499.6L529.9 500.6L524.5 501.8Z" />
<text class="glc" x="512.4" y="511.8"  text-anchor="middle" textLength="5" lengthAdjust="spacingAndGlyphs">A</text>
<path class="g" d="M492.5 511.6L492.5 525.0" />
<path class="g" d="M547.5 511.6L547.5 525.0" />
<path class="g" d="M492.3 522.5L547.7 522.5" />
<path class="gf" d="M492.3 522.2L497 521.4L497 523Z" />
<path class="gf" d="M547.7 522.2L543 521.4L543 523Z" />
<text class="gts" x="520.2" y="521.0"  text-anchor="middle">80</text>
<circle class="w" cx="794.4" cy="95.5" r="21.6" />
<circle class="w" cx="794.4" cy="95.5" r="6.8" />
<path class="w" d="M759.9 111.7L650.8 295.0" />
<path class="w" d="M796.8 131.8L702.1 291.0" />
<path class="w" d="M759.9 111.7L796.8 131.8" />
<path class="w" d="M759.9 111.7L772.8 98.4" />
<path class="w" d="M796.8 131.8L801.5 118.2" />
<path class="c" d="M781.4 124.2L681.7 291.8" />
<path class="md" d="M774.8 120.2L677.7 283.5" />
<path class="rd" d="M777.1 123.9L680.5 286.4" />
<path class="mdd" d="M649.5 297.2L605.0 372.1" />
<path class="mdd" d="M670.7 295.2L612.6 392.9" />
<path class="mdd" d="M680.3 294.2L619.2 396.9" />
<path class="mdd" d="M701.6 291.8L638.0 398.7" />
<path class="rd" d="M677.5 291.3L554.2 499.4" />
<path class="rd3" d="M817.6 109.3L771.2 81.7" />
<path class="rd3" d="M794.4 95.5L780.6 118.7" />
<circle class="w" cx="601.2" cy="420.3" r="21.3" />
<circle class="w" cx="601.2" cy="420.3" r="6.8" />
<path class="w" d="M573.1 396L573.1 420.3A28.1 28.1 0 1 0 629.1 417.6" />
<path class="w" d="M623.2 417.3L646.3 387.2" />
<path class="w" d="M609.2 389.2L634.5 404.5" />
<path class="w" d="M573.1 396L564.5 396M577.5 389.5Q576.5 396.5 583 398.5" />
<path class="c" d="M614.5 393.5L619.0 388.5L624.3 391.5L621.2 396.8" />
<path class="rd2" d="M570.7 420.5L631.7 420.5" />
<path class="rd2" d="M601.5 389.8L601.5 450.8" />
<path class="r" d="M586.6 411.6L578.0 406.5" />
<path class="r" d="M615.8 429.0L624.4 434.1" />
<text class="gl" x="145.6" y="186.8"  text-anchor="middle" textLength="4.5" lengthAdjust="spacingAndGlyphs">1</text>
<path class="g" d="M141.2 188.5L150.7 188.5" />
<path class="g" d="M141.2 188.5L162.9 233.2" />
<text class="glb" x="235.5" y="199.8"  text-anchor="middle" textLength="5.6" lengthAdjust="spacingAndGlyphs">2</text>
<path class="g" d="M230.0 201.5L240.0 201.5" />
<path class="g" d="M230.0 201.5L301.2 271.1" />
<text class="gl" x="313.8" y="215.6"  text-anchor="middle" textLength="4.5" lengthAdjust="spacingAndGlyphs">3</text>
<path class="g" d="M312.7 217.5L321.1 217.5" />
<path class="g" d="M312.7 217.5L349.6 283.2" />
<text class="gl" x="455.8" y="209.6"  text-anchor="middle" textLength="4.5" lengthAdjust="spacingAndGlyphs">4</text>
<path class="g" d="M453.5 211.5L463.1 211.5" />
<path class="g" d="M453.5 211.3L493.5 283.5" />
<text class="gl" x="568.8" y="209.6"  text-anchor="middle" textLength="4.5" lengthAdjust="spacingAndGlyphs">5</text>
<path class="g" d="M566.5 211.5L576.1 211.5" />
<path class="g" d="M566.5 211.3L520.3 300.5" />
<text class="gl" x="620.3" y="193.5"  text-anchor="middle" textLength="4.5" lengthAdjust="spacingAndGlyphs">6</text>
<path class="g" d="M615.1 195.5L624.7 195.5" />
<path class="g" d="M615.1 195.2L570.5 310.3" />
<text class="gl" x="681.1" y="200.7"  text-anchor="middle" textLength="4.5" lengthAdjust="spacingAndGlyphs">7</text>
<path class="g" d="M679.3 202.5L688.7 202.5" />
<path class="g" d="M679.3 202.4L631.3 350.8" />
<text class="gl" x="809.5" y="186.7"  text-anchor="middle" textLength="4.5" lengthAdjust="spacingAndGlyphs">8</text>
<path class="g" d="M807.5 188.5L816.1 188.5" />
<path class="g" d="M807.5 188.4L848.2 262.2" />
<text class="gl" x="596.4" y="417.4"  text-anchor="middle" textLength="9.0" lengthAdjust="spacingAndGlyphs">10</text>
<path class="g" d="M594.1 421.0L533.8 440.2" />
<text class="gl" x="406.2" y="421.6"  text-anchor="middle" textLength="9.0" lengthAdjust="spacingAndGlyphs">11</text>
<path class="g" d="M399.3 423.3L420.1 422.8L621.9 405.9" />
<path class="g" d="M198.0 233.4L184.3 230.2L157.7 349.8L170.3 353.2" />
<path class="gf" d="M198 233.4L192.5 231L192.3 233.2Z" />
<path class="gf" d="M170.3 353.2L164.5 350.6L164.3 353Z" />
<text class="glc" x="181.7" y="218.8"  text-anchor="middle" textLength="4.6" lengthAdjust="spacingAndGlyphs">C</text>
<text class="glc" x="149.3" y="357.6"  text-anchor="middle" textLength="4.6" lengthAdjust="spacingAndGlyphs">C</text>
<path class="g" d="M852.4 238.3L845.4 240.1L868.4 352.4L877.4 351.6" />
<path class="gf" d="M852.4 238.3L847.5 238.3L848 240Z" />
<path class="gf" d="M877.4 351.6L872.5 351.3L873 353Z" />
<text class="gtb" x="839.7" y="241.2"  text-anchor="middle">B</text>
<text class="gtb" x="866.4" y="365.0"  text-anchor="middle">B</text>
<text class="gtB" x="120.2" y="468.0"  text-anchor="middle">C</text>
<text class="gtB" x="156.3" y="468.0"  text-anchor="middle">C</text>
<path class="g" d="M125.7 463.5L151.4 463.5" />
<path class="hc" d="M140.7 494.2L149.6 494.2L149.6 525.8Q149.6 530.7 154.7 530.7L236 530.7Q241.6 530.7 241.6 536.9L241.6 604.6L216.7 604.6L216.7 615.3L165.2 615.3L165.2 615.3L149.6 615.3L149.6 663.7L140.7 663.7Z" />
<path class="w" d="M140.7 494.2L149.6 494.2L149.6 525.8Q149.6 530.7 154.7 530.7L236 530.7Q241.6 530.7 241.6 536.9L241.6 604.6L216.7 604.6L216.7 615.3L165.2 615.3L165.2 615.3L149.6 615.3L149.6 663.7L140.7 663.7Z" />
<path class="wb" d="M165.2 567.5L165.2 552Q165.2 549.6 167.6 549.6L214.3 549.6Q216.7 549.6 216.7 552L216.7 567.5Z" />
<rect class="hcm" x="165.2" y="559.2" width="51.5" height="8.3"/>
<rect class="w" x="165.2" y="559.2" width="51.5" height="8.3" />
<rect class="hcb" x="140.7" y="567.5" width="100.9" height="27.4"/>
<rect class="w" x="140.7" y="567.5" width="100.9" height="27.4" />
<path class="w" d="M140.7 571.5L148.5 571.5L150.5 567.5" />
<rect class="hcm" x="165.2" y="594.9" width="51.5" height="20.4"/>
<rect class="w" x="165.2" y="594.9" width="51.5" height="20.4" />
<rect class="hc" x="165.2" y="615.3" width="51.5" height="7.2"/>
<rect class="w" x="165.2" y="615.3" width="51.5" height="7.2" />
<rect class="hw" x="165.2" y="622.5" width="51.5" height="6.6"/>
<rect class="w" x="165.2" y="622.5" width="51.5" height="6.6" />
<rect class="hc" x="165.2" y="629.1" width="51.5" height="7.2"/>
<rect class="w" x="165.2" y="629.1" width="51.5" height="7.2" />
<path class="w" d="M165.2 636.3L165.2 656Q165.2 664.3 171.4 664.3L211.5 664.3Q216.7 664.3 216.7 656L216.7 636.3" />
<circle class="hcm" cx="152.5" cy="595.3" r="3.8" />
<circle class="hcm" cx="229.4" cy="595.3" r="3.8" />
<circle class="w" cx="152.5" cy="595.3" r="4.0" />
<circle class="w" cx="229.4" cy="595.3" r="4.0" />
<rect class="wb" x="165.2" y="567.5" width="44.2" height="3.8" />
<rect class="w" x="184.2" y="580.5" width="57.4" height="2.2" />
<path class="wb" d="M188.2 571.0L188.2 580.5L190.6 580.5L190.6 571.0" />
<rect class="wb" x="241.6" y="578.3" width="4.4" height="6.2" />
<rect class="w" x="236.8" y="579.3" width="4.8" height="4.4" />
<rect class="w" x="206.0" y="579.8" width="1.8" height="3.6" />
<path class="wb" d="M131.3 482.3L140.7 482.3L140.7 695Q140.7 706.7 129 706.7L70.5 706.7L70.5 698.7L127.5 698.7Q131.3 698.7 131.3 694.5Z" />
<path class="w" d="M131.3 497.9A7.8 7.8 0 0 0 131.3 513.5" />
<path class="w" d="M131.3 605.7A7.8 7.8 0 0 0 131.3 621.3" />
<path class="w" d="M131.3 644.7A7.8 7.8 0 0 0 131.3 660.3" />
<rect class="wb" x="131.3" y="647.0" width="24.3" height="11.0" />
<path class="w" d="M140.5 647.0L140.5 658.0" />
<path class="w" d="M149.6 647Q156 648 155.8 652.5Q156 657 149.6 658" />
<path class="rd2" d="M113.0 652.5L155.8 652.5" />
<path class="w" d="M156.5 615.3L156.5 641.4" />
<path class="w" d="M149.5 615.3L149.5 663.7" />
<rect class="w" x="150.4" y="641.4" width="14.2" height="5.0" />
<path class="w" d="M151.8 648.9L154.3 646.4L161.1 646.4L163.6 648.9L163.6 658.9L161.1 661.4L154.3 661.4L151.8 658.9Z" />
<path class="w" d="M151.8 648.5L163.6 648.5" />
<path class="w" d="M151.8 658.5L163.6 658.5" />
<path class="r" d="M160.5 634.7L160.5 661.4" />
<path class="w" d="M217.5 604.6L217.5 641.4" />
<path class="w" d="M226.5 604.6L226.5 641.4" />
<rect class="w" x="216.2" y="641.4" width="15.4" height="5.0" />
<path class="w" d="M217.6 648.9L220.1 646.4L226.9 646.4L229.4 648.9L229.4 657.8L226.9 660.3L220.1 660.3L217.6 657.8Z" />
<path class="w" d="M217.6 648.5L229.4 648.5" />
<path class="w" d="M217.6 657.5L229.4 657.5" />
<path class="r" d="M221.5 634.7L221.5 660.3" />
<path class="w" d="M149.6 495.7L193.7 530.3" />
<path class="rd2" d="M130.2 581.5L245.0 581.5" />
<text class="g9" x="277.3" y="525.6"  text-anchor="middle" textLength="3.6" lengthAdjust="spacingAndGlyphs">9</text>
<path class="g" d="M282.8 532.0L270.6 532.0L241.6 571.5" />
<text class="glc" x="337.9" y="467.3"  text-anchor="middle" textLength="5" lengthAdjust="spacingAndGlyphs">A</text>
<text class="glc" x="372.9" y="467.3"  text-anchor="middle" textLength="5" lengthAdjust="spacingAndGlyphs">A</text>
<path class="g" d="M343.0 463.5L369.1 463.5" />
<path class="w" d="M326.1 707L326.1 490.1A10 10 0 0 1 336.1 480.1L379.6 480.1A10 10 0 0 1 389.6 490.1L389.6 707" />
<path class="w" d="M334.1 707L334.1 493.5A5.6 5.6 0 0 1 339.7 487.9L376.2 487.9A5.6 5.6 0 0 1 381.8 493.5L381.8 707" />
<path class="rdd" d="M330.1 720.8L330.1 491.9A7.8 7.8 0 0 1 337.9 484.1L378 484.1A7.8 7.8 0 0 1 385.8 491.9L385.8 720.8" />
<path class="hc" d="M334.6 503.1L334.6 493.5Q334.6 489.3 339.7 489.3L376.2 489.3Q381.4 489.3 381.4 493.5L381.4 503.1Z" />
<path class="wb" d="M339.5 503.1Q339.3 494.6 347 494.2L369 494.2Q376.7 494.6 376.5 503.1Z" />
<path class="w" d="M347.5 501.8Q349 498.5 353 498.3L353.5 496L361.5 496L362 498.3Q366 498.5 367.5 501.8Z" />
<rect class="hcd" x="334.6" y="503.1" width="46.8" height="92.9"/>
<rect class="kb" x="353.5" y="503.6" width="8.3" height="92.4" />
<path class="w" d="M353.5 596L353.5 518.5L354.2 518.5L354.2 503.8L361.1 503.8L361.1 518.5L361.8 518.5L361.8 596" />
<path class="w" d="M354.2 518.5L361.1 518.5" />
<path class="c" d="M344.5 505.7L340.5 508.0L344.5 510.3" />
<path class="c" d="M370.5 505.7L374.5 508.0L370.5 510.3" />
<path class="c" d="M344.5 515.9L340.5 518.2L344.5 520.5" />
<path class="c" d="M370.5 515.9L374.5 518.2L370.5 520.5" />
<path class="c" d="M344.5 526.1L340.5 528.4L344.5 530.7" />
<path class="c" d="M370.5 526.1L374.5 528.4L370.5 530.7" />
<path class="c" d="M344.5 536.3L340.5 538.6L344.5 540.9" />
<path class="c" d="M370.5 536.3L374.5 538.6L370.5 540.9" />
<path class="c" d="M344.5 546.5L340.5 548.8L344.5 551.1" />
<path class="c" d="M370.5 546.5L374.5 548.8L370.5 551.1" />
<path class="c" d="M344.5 556.7L340.5 559.0L344.5 561.3" />
<path class="c" d="M370.5 556.7L374.5 559.0L370.5 561.3" />
<path class="c" d="M344.5 566.9L340.5 569.2L344.5 571.5" />
<path class="c" d="M370.5 566.9L374.5 569.2L370.5 571.5" />
<path class="c" d="M344.5 577.1L340.5 579.4L344.5 581.7" />
<path class="c" d="M370.5 577.1L374.5 579.4L370.5 581.7" />
<path class="c" d="M344.5 587.3L340.5 589.6L344.5 591.9" />
<path class="c" d="M370.5 587.3L374.5 589.6L370.5 591.9" />
<rect class="hc" x="334.6" y="596.0" width="46.8" height="7.5"/>
<rect class="wb" x="348.4" y="596.7" width="18.5" height="4.9" />
<rect class="hc" x="334.6" y="633.5" width="46.8" height="7.1"/>
<path class="rdd" d="M316.7 603.5L403.7 603.5" />
<path class="rdd" d="M316.7 633.5L403.7 633.5" />
<path class="w" d="M317.9 647.3L324.6 640.6L390.9 640.6L397.6 647.3L397.6 660.7L317.9 660.7Z" />
<path class="w" d="M342.4 660.7Q344 664.2 347 664.2L369 664.2Q372 664.2 373.6 660.7" />
<rect class="w" x="326.8" y="652.4" width="7.3" height="8.3" />
<rect class="w" x="381.8" y="652.4" width="7.8" height="8.3" />
<path class="w" d="M318.5 666.2L324.0 660.7L336.9 660.7L342.4 666.2L342.4 692.6L336.9 698.1L324.0 698.1L318.5 692.6Z" />
<path class="w" d="M318.5 666.5L342.4 666.5" />
<path class="w" d="M318.5 692.5L342.4 692.5" />
<path class="w" d="M373.6 666.2L379.1 660.7L392.1 660.7L397.6 666.2L397.6 692.6L392.1 698.1L379.1 698.1L373.6 692.6Z" />
<path class="w" d="M373.6 666.5L397.6 666.5" />
<path class="w" d="M373.6 692.5L397.6 692.5" />
<path class="w" d="M326.8 698.1L326.8 706.0L327.8 707.0L333.1 707.0L334.1 706.0L334.1 698.1" />
<path class="w" d="M381.8 698.1L381.8 706.0L382.8 707.0L388.6 707.0L389.6 706.0L389.6 698.1" />
<path class="rdd" d="M357.5 469.0L357.5 742.7" />
<text class="gtB" x="654.0" y="516.4"  text-anchor="middle">B</text>
<text class="gtB" x="689.8" y="516.4"  text-anchor="middle">B</text>
<path class="g" d="M659.1 511.5L683.6 511.5" />
<path class="wb" d="M667.3 530Q667.3 528.3 669 528.3L675 528.3Q676.5 528.3 676.5 530L676.5 714Q676.5 726.4 664 726.4L606 726.4L606 717.4L663 717.4Q667.3 717.4 667.3 713Z" />
<path class="w" d="M676.5 551.7L676.5 687.4" />
<path class="hc" d="M676.5 551.7L685.8 551.7L685.8 601.4Q685.8 608.6 692.5 608.6L732.6 608.6Q745.3 610 745.3 621.5L745.3 687.4L736.6 687.4L736.6 684.7L685.8 684.7L685.8 687.4L676.5 687.4Z" />
<path class="w" d="M676.5 551.7L685.8 551.7L685.8 601.4Q685.8 608.6 692.5 608.6L732.6 608.6Q745.3 610 745.3 621.5L745.3 687.4L736.6 687.4L736.6 684.7L685.8 684.7L685.8 687.4L676.5 687.4Z" />
<path class="wb" d="M685.8 630.4L685.8 624Q686 617.5 694.7 617.5L728.2 617.5Q736.6 617.5 736.6 625.9L736.6 630.4Z" />
<rect class="kb" x="685.8" y="638.9" width="50.4" height="26.2" />
<rect class="hcd" x="685.8" y="638.9" width="3.8" height="26.2"/>
<rect class="w" x="685.8" y="638.9" width="3.8" height="26.2" />
<rect class="hcd" x="732.4" y="638.9" width="3.8" height="26.2"/>
<rect class="w" x="732.4" y="638.9" width="3.8" height="26.2" />
<rect class="hc2" x="689.6" y="638.9" width="42.8" height="7.6"/>
<rect class="w" x="689.6" y="638.9" width="42.8" height="7.6" />
<rect class="hw2" x="689.6" y="646.5" width="42.8" height="7.5"/>
<rect class="w" x="689.6" y="646.5" width="42.8" height="7.5" />
<rect class="hc2" x="689.6" y="654.0" width="42.8" height="7.6"/>
<rect class="w" x="689.6" y="654.0" width="42.8" height="7.6" />
<rect class="hcd" x="689.6" y="661.6" width="42.8" height="3.5"/>
<rect class="w" x="689.6" y="661.6" width="42.8" height="3.5" />
<rect class="wb" x="681.4" y="636.0" width="59.7" height="2.9" />
<rect class="hcd" x="685.8" y="680.2" width="50.8" height="4.5"/>
<rect class="w" x="685.8" y="680.2" width="50.8" height="4.5" />
<rect class="wb" x="667.3" y="665.1" width="76.5" height="15.1" />
<path class="w" d="M667.3 662.6A10.2 10.2 0 0 0 667.3 682.8" />
<rect class="w" x="743.8" y="664.8" width="3.6" height="15.4" />
<rect class="w" x="747.4" y="665.6" width="14.2" height="14.2" />
<path class="w" d="M749.5 665.6L749.5 662.8L758 662.8L758 665.6M749.5 679.8L749.5 682.4L758 682.4L758 679.8" />
<path class="w" d="M752.5 665.6L752.5 679.8" />
<path class="rd2" d="M654.2 672.5L770.9 672.5" />
<rect class="kb" x="676.5" y="555.5" width="9.3" height="15.5" />
<path class="w" d="M667.3 555.5A7.8 7.8 0 0 0 667.3 571.1" />
<path class="w" d="M685.8 555.5A7.8 7.8 0 0 1 685.8 571.1" />
<path class="w" d="M667.3 555.5L685.8 555.5" />
<path class="w" d="M667.3 571.5L685.8 571.5" />
<path class="rd2" d="M650.6 563.5L703.7 563.5" />
<path class="w" d="M667.3 621.5A7.8 7.8 0 0 0 667.3 637.1" />
<path class="w" d="M685.8 578.0L734.8 608.1" />
<text class="nt" x="845.2" y="421.6"  text-anchor="middle" textLength="49.5" lengthAdjust="spacingAndGlyphs">技术条件</text>
<text class="nn" x="764.8" y="446.5"  textLength="259.5" lengthAdjust="spacingAndGlyphs">1.钢板弹簧表面采用喷丸处理工艺和减少表面脱碳的措施来提高钢板弹簧的寿</text>
<text class="nn" x="762.9" y="459.7"  textLength="131" lengthAdjust="spacingAndGlyphs">2命使用的零件或组件有良好的互换性。</text>
<text class="nn" x="763.3" y="472.2"  textLength="122.5" lengthAdjust="spacingAndGlyphs">3.采用先进、可靠的加工制造技术。</text>
<text class="nn" x="763.3" y="486.1"  textLength="85" lengthAdjust="spacingAndGlyphs">4.不加工外表面喷黑漆。</text>
<path class="g" d="M820.5 568.5L1033.5 568.5" />
<path class="g" d="M820.5 580.5L1033.5 580.5" />
<path class="g" d="M820.5 592.5L1033.5 592.5" />
<path class="g" d="M820.5 605.5L1033.5 605.5" />
<path class="g" d="M820.5 617.5L1033.5 617.5" />
<path class="g" d="M820.5 629.5L1033.5 629.5" />
<path class="g" d="M820.5 641.5L1033.5 641.5" />
<path class="g" d="M820.5 653.5L1033.5 653.5" />
<path class="g" d="M820.5 666.5L1033.5 666.5" />
<path class="g" d="M820.5 678.5L1033.5 678.5" />
<path class="g" d="M820.5 690.5L1033.5 690.5" />
<path class="g" d="M820.5 702.5L1033.5 702.5" />
<path class="g" d="M820.5 714.5L1033.5 714.5" />
<path class="g" d="M820.5 727.5L896.5 727.5" />
<path class="g" d="M972.5 727.5L1033.5 727.5" />
<path class="g" d="M820.5 739.5L1033.5 739.5" />
<path class="g" d="M820.5 568.5L820.5 751.5" />
<path class="g" d="M835.5 568.5L835.5 714.5" />
<path class="g" d="M896.5 568.5L896.5 714.5" />
<path class="g" d="M911.5 568.5L911.5 714.5" />
<path class="g" d="M972.5 568.5L972.5 714.5" />
<path class="g" d="M835.5 714.5L835.5 739.5" />
<path class="g" d="M866.5 714.5L866.5 739.5" />
<path class="g" d="M896.5 714.5L896.5 751.5" />
<path class="g" d="M972.5 714.5L972.5 739.5" />
<text class="tn" x="827.5" y="576.9"  text-anchor="middle" textLength="6.6" lengthAdjust="spacingAndGlyphs">11</text>
<text class="tt" x="866.0" y="576.9"  text-anchor="middle" textLength="24.0" lengthAdjust="spacingAndGlyphs">减震器</text>
<text class="tn" x="904.0" y="576.9"  text-anchor="middle" textLength="3.4" lengthAdjust="spacingAndGlyphs">1</text>
<text class="tn" x="827.5" y="589.1"  text-anchor="middle" textLength="6.6" lengthAdjust="spacingAndGlyphs">10</text>
<text class="tt" x="866.0" y="589.1"  text-anchor="middle" textLength="16.0" lengthAdjust="spacingAndGlyphs">车架</text>
<text class="tn" x="904.0" y="589.1"  text-anchor="middle" textLength="3.4" lengthAdjust="spacingAndGlyphs">1</text>
<text class="tt" x="941.5" y="589.1"  text-anchor="middle" textLength="14" lengthAdjust="spacingAndGlyphs">配料</text>
<text class="tn" x="827.5" y="601.3"  text-anchor="middle" textLength="3.4" lengthAdjust="spacingAndGlyphs">9</text>
<text class="tt" x="866.0" y="601.3"  text-anchor="middle" textLength="40.0" lengthAdjust="spacingAndGlyphs">钢板弹簧销</text>
<text class="tn" x="904.0" y="601.3"  text-anchor="middle" textLength="3.4" lengthAdjust="spacingAndGlyphs">1</text>
<text class="tt" x="941.5" y="601.3"  text-anchor="middle" textLength="14" lengthAdjust="spacingAndGlyphs">45钢</text>
<text class="tn" x="827.5" y="613.5"  text-anchor="middle" textLength="3.4" lengthAdjust="spacingAndGlyphs">8</text>
<text class="tt" x="866.0" y="613.5"  text-anchor="middle" textLength="40.0" lengthAdjust="spacingAndGlyphs">主簧后支架</text>
<text class="tn" x="904.0" y="613.5"  text-anchor="middle" textLength="3.4" lengthAdjust="spacingAndGlyphs">1</text>
<text class="tt" x="941.5" y="613.5"  text-anchor="middle" textLength="14" lengthAdjust="spacingAndGlyphs">45钢</text>
<text class="tn" x="827.5" y="625.7"  text-anchor="middle" textLength="3.4" lengthAdjust="spacingAndGlyphs">7</text>
<text class="tt" x="866.0" y="625.7"  text-anchor="middle" textLength="16.0" lengthAdjust="spacingAndGlyphs">主簧</text>
<text class="tt2" x="904.0" y="625.7"  text-anchor="middle" textLength="11" lengthAdjust="spacingAndGlyphs">11片</text>
<text class="tt" x="941.5" y="625.7"  text-anchor="middle" textLength="26" lengthAdjust="spacingAndGlyphs">60Si2Mn</text>
<text class="tn" x="827.5" y="637.9"  text-anchor="middle" textLength="3.4" lengthAdjust="spacingAndGlyphs">6</text>
<text class="tt" x="866.0" y="637.9"  text-anchor="middle" textLength="16.0" lengthAdjust="spacingAndGlyphs">副簧</text>
<text class="tt2" x="904.0" y="637.9"  text-anchor="middle" textLength="8.5" lengthAdjust="spacingAndGlyphs">5片</text>
<text class="tt" x="941.5" y="637.9"  text-anchor="middle" textLength="26" lengthAdjust="spacingAndGlyphs">60Si2Mn</text>
<text class="tn" x="827.5" y="650.1"  text-anchor="middle" textLength="3.4" lengthAdjust="spacingAndGlyphs">5</text>
<text class="tt" x="866.0" y="650.1"  text-anchor="middle" textLength="32.0" lengthAdjust="spacingAndGlyphs">中心螺栓</text>
<text class="tn" x="904.0" y="650.1"  text-anchor="middle" textLength="3.4" lengthAdjust="spacingAndGlyphs">1</text>
<text class="tt" x="941.5" y="650.1"  text-anchor="middle" textLength="28.5" lengthAdjust="spacingAndGlyphs">HRC55-62</text>
<text class="tn" x="827.5" y="662.3"  text-anchor="middle" textLength="3.4" lengthAdjust="spacingAndGlyphs">4</text>
<text class="tt" x="866.0" y="662.3"  text-anchor="middle" textLength="30" lengthAdjust="spacingAndGlyphs">U形螺栓</text>
<text class="tn" x="904.0" y="662.3"  text-anchor="middle" textLength="3.4" lengthAdjust="spacingAndGlyphs">1</text>
<text class="tt" x="941.5" y="662.3"  text-anchor="middle" textLength="28.5" lengthAdjust="spacingAndGlyphs">HRC55-62</text>
<text class="tn" x="827.5" y="674.5"  text-anchor="middle" textLength="3.4" lengthAdjust="spacingAndGlyphs">3</text>
<text class="tt" x="866.0" y="674.5"  text-anchor="middle" textLength="40.0" lengthAdjust="spacingAndGlyphs">钢板弹簧夹</text>
<text class="tn" x="904.0" y="674.5"  text-anchor="middle" textLength="3.4" lengthAdjust="spacingAndGlyphs">2</text>
<text class="tt" x="941.5" y="674.5"  text-anchor="middle" textLength="14" lengthAdjust="spacingAndGlyphs">45钢</text>
<text class="tn" x="827.5" y="686.7"  text-anchor="middle" textLength="3.4" lengthAdjust="spacingAndGlyphs">2</text>
<text class="tt" x="866.0" y="686.7"  text-anchor="middle" textLength="32.0" lengthAdjust="spacingAndGlyphs">副簧托架</text>
<text class="tn" x="904.0" y="686.7"  text-anchor="middle" textLength="3.4" lengthAdjust="spacingAndGlyphs">2</text>
<text class="tt" x="941.5" y="686.7"  text-anchor="middle" textLength="14" lengthAdjust="spacingAndGlyphs">45钢</text>
<text class="tn" x="827.5" y="698.9"  text-anchor="middle" textLength="3.4" lengthAdjust="spacingAndGlyphs">1</text>
<text class="tt" x="866.0" y="698.9"  text-anchor="middle" textLength="40.0" lengthAdjust="spacingAndGlyphs">主簧前支架</text>
<text class="tn" x="904.0" y="698.9"  text-anchor="middle" textLength="3.4" lengthAdjust="spacingAndGlyphs">1</text>
<text class="tt" x="941.5" y="698.9"  text-anchor="middle" textLength="14" lengthAdjust="spacingAndGlyphs">45钢</text>
<text class="tt2" x="828.0" y="712.2"  text-anchor="middle">序号</text>
<text class="tt" x="850.0" y="712.2"  text-anchor="middle">名</text>
<text class="tt" x="875.0" y="712.2"  text-anchor="middle">称</text>
<text class="tt2" x="904.0" y="712.2"  text-anchor="middle">数量</text>
<text class="tt" x="929.0" y="712.2"  text-anchor="middle">材</text>
<text class="tt" x="954.0" y="712.2"  text-anchor="middle">料</text>
<text class="tt" x="981.0" y="712.2"  text-anchor="middle">附</text>
<text class="tt" x="1021.5" y="712.2"  text-anchor="middle">注</text>
<text class="tt2" x="828.0" y="724.2"  text-anchor="middle">制图</text>
<text class="tt2" x="828.0" y="736.4"  text-anchor="middle">校核</text>
<text class="tt" x="934.0" y="730.1"  text-anchor="middle" textLength="66" lengthAdjust="spacingAndGlyphs">后悬架总体布置图</text>
<text class="tt" x="1003.0" y="724.2"  text-anchor="middle" textLength="18" lengthAdjust="spacingAndGlyphs">1: 2</text>
<text class="tt" x="1002.0" y="736.7"  text-anchor="middle" textLength="38" lengthAdjust="spacingAndGlyphs">共1张 第1张</text>
<text class="tt" x="963.5" y="747.6"  text-anchor="middle">A0</text>
</svg>
</body></html>
